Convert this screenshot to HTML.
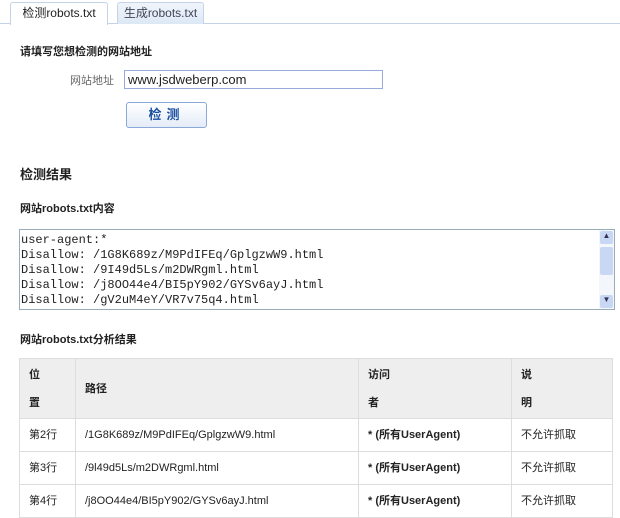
<!DOCTYPE html>
<html><head><meta charset="utf-8"><style>
body{margin:0;width:620px;height:518px;overflow:hidden;background:#fff;font-family:"Liberation Sans","Noto Sans CJK SC",sans-serif;font-size:12px;color:#222;position:relative}
.a{position:absolute}
.tab{position:absolute;top:2px;height:21px;border:1px solid #c5d3e6;border-bottom:none;border-radius:3px 3px 0 0;font-size:12px;line-height:21px;text-align:center}
table{border-collapse:collapse;table-layout:fixed;position:absolute;left:19px;top:358px;width:594px;font-size:11px}
td{border:1px solid #ddd;padding:0 0 0 9px;vertical-align:middle;height:32px;line-height:14px}
th{border:1px solid #ddd;background:#eee;text-align:left;padding:0 0 0 9px;font-weight:bold;font-size:11px;line-height:28px;height:59px;vertical-align:middle}
</style></head><body>
<div class="a" style="left:0;top:23px;width:620px;height:1px;background:#c5d3e6"></div>
<div class="tab" style="left:10px;width:96px;background:#fff;height:22px;color:#222">检测robots.txt</div>
<div class="tab" style="left:117px;width:85px;background:linear-gradient(#f0f5fc,#dde8f6);color:#445">生成robots.txt</div>
<div class="a" style="left:20px;top:43px;font-weight:bold;font-size:11px">请填写您想检测的网站地址</div>
<div class="a" style="left:70px;top:72px;color:#666;font-size:11px">网站地址</div>
<div class="a" style="left:124px;top:70px;width:254px;height:17px;border:1px solid #99aadd;font-size:13px;line-height:17px;padding-left:3px;box-sizing:content-box">www.jsdweberp.com</div>
<div class="a" style="left:126px;top:102px;width:79px;height:24px;border:1px solid #8aa8d8;border-radius:3px;background:linear-gradient(#fff,#e4ecf8);text-align:center;line-height:24px;font-weight:bold;color:#1a4fa0;font-size:13px;letter-spacing:5px">检测</div>
<div class="a" style="left:20px;top:164px;font-weight:bold;font-size:13px">检测结果</div>
<div class="a" style="left:20px;top:200px;font-weight:bold;font-size:11px">网站robots.txt内容</div>
<div class="a" style="left:19px;top:229px;width:594px;height:79px;border:1px solid #9ab;overflow:hidden">
<div style="font-family:'Liberation Mono',monospace;font-size:12px;line-height:15px;padding:3px 0 0 1px;white-space:pre;color:#222">user-agent:*
Disallow: /1G8K689z/M9PdIFEq/GplgzwW9.html
Disallow: /9I49d5Ls/m2DWRgml.html
Disallow: /j8OO44e4/BI5pY902/GYSv6ayJ.html
Disallow: /gV2uM4eY/VR7v75q4.html</div>
<div class="a" style="right:0;top:0;width:15px;height:79px;background:#f3f6fb"></div>
<div class="a" style="right:1px;top:1px;width:13px;height:13px;background:#c8d8f4;border-radius:2px;font-size:8px;text-align:center;color:#335">▲</div>
<div class="a" style="right:1px;top:17px;width:13px;height:28px;background:#c8d8f4;border-radius:2px"></div>
<div class="a" style="right:1px;bottom:1px;width:13px;height:13px;background:#c8d8f4;border-radius:2px;font-size:8px;text-align:center;color:#335">▼</div>
</div>
<div class="a" style="left:20px;top:331px;font-weight:bold;font-size:11px">网站robots.txt分析结果</div>
<table>
<tr><th style="width:46px">位<br>置</th><th style="width:273px">路径</th><th style="width:143px">访问<br>者</th><th>说<br>明</th></tr>
<tr><td>第2行</td><td>/1G8K689z/M9PdIFEq/GplgzwW9.html</td><td><b>* (所有UserAgent)</b></td><td>不允许抓取</td></tr>
<tr><td>第3行</td><td>/9l49d5Ls/m2DWRgml.html</td><td><b>* (所有UserAgent)</b></td><td>不允许抓取</td></tr>
<tr><td>第4行</td><td>/j8OO44e4/BI5pY902/GYSv6ayJ.html</td><td><b>* (所有UserAgent)</b></td><td>不允许抓取</td></tr>
</table>
</body></html>
